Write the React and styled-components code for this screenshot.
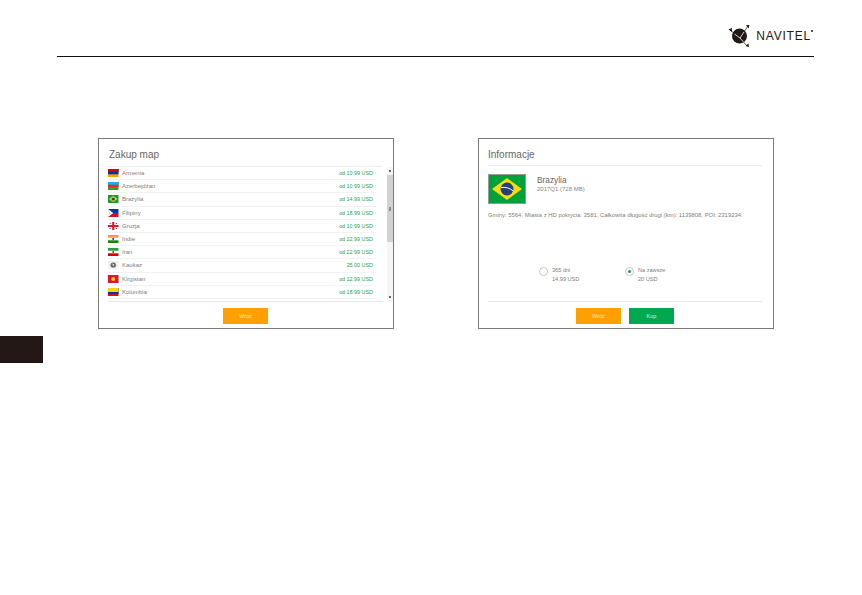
import React from 'react';
import styled, { createGlobalStyle } from 'styled-components';

const GlobalStyle = createGlobalStyle`
  html, body {
    margin: 0;
    padding: 0;
    background: #fff;
    font-family: 'Liberation Sans', Arial, sans-serif;
  }
`;

const Page = styled.div`
  width: 862px;
  height: 595px;
  overflow: hidden;
`;

const Header = styled.header`
  margin: 0 48px 0 57px;
  height: 56px;
  border-bottom: 1px solid #111;
  display: flex;
  justify-content: flex-end;
  align-items: flex-start;
`;

const Logo = styled.div`
  display: flex;
  align-items: center;
  margin-top: 24px;
  margin-right: 1px;
  color: #231815;
`;

const LogoText = styled.span`
  font-size: 12px;
  line-height: 24px;
  letter-spacing: 0.8px;
  margin-left: 2px;
`;

const LogoMark = styled.i`
  width: 2px;
  height: 2px;
  border-radius: 50%;
  background: #231815;
  align-self: flex-start;
  margin: 6px 0 0 0;
`;

const Panels = styled.main`
  display: flex;
  gap: 84px;
  margin: 81px 0 0 98px;
`;

const Panel = styled.section`
  width: 296px;
  height: 191px;
  box-sizing: border-box;
  border: 1px solid #7a7a7a;
  padding: 0 10px 0 9px;
  display: flex;
  flex-direction: column;
  color: #6b6b6b;
`;

const Title = styled.h2`
  margin: 0 1px 0 0;
  height: ${p => p.$height}px;
  padding-left: ${p => p.$indent || 0}px;
  line-height: 31px;
  font-size: 10px;
  font-weight: 400;
  color: #666;
  border-bottom: 1px solid #eee;
`;

const ListArea = styled.div`
  display: flex;
  height: 134px;
  margin-right: -10px;
`;

const List = styled.ul`
  list-style: none;
  margin: 0 11px 0 0;
  padding: 0;
  width: 268px;
  flex: none;
`;

const Row = styled.li`
  height: 13.2px;
  box-sizing: border-box;
  border-bottom: 1px solid #f2f2f2;
  display: flex;
  align-items: center;
  font-size: 6px;
  color: #808080;
`;

const RowFlag = styled.svg`
  width: 10.5px;
  height: 8px;
  margin-right: 3.5px;
  flex: none;
`;

const RowName = styled.span`
  flex: 1;
`;

const RowPrice = styled.span`
  color: #2ea04a;
  font-size: 5.4px;
  margin-right: 3px;
`;

const Scrollbar = styled.div`
  width: 6px;
  height: 134px;
  background: #f5f5f5;
  position: relative;
  flex: none;
`;

const Thumb = styled.div`
  position: absolute;
  top: 8px;
  left: 0;
  width: 6px;
  height: 67px;
  background: #d2d2d2;
  display: flex;
  align-items: center;
  justify-content: center;
  &::after {
    content: '';
    width: 2px;
    height: 4px;
    background: #8c8c8c;
  }
`;

const Arrow = styled.i`
  position: absolute;
  left: 2px;
  width: 2px;
  height: 2px;
  background: #666;
  ${p => (p.$bottom ? 'bottom: 3px;' : 'top: 3px;')}
`;

const Footer = styled.footer`
  margin-right: ${p => p.$inset || 0}px;
  border-top: 1px solid #e6e6e6;
  flex: 1;
  display: flex;
  justify-content: center;
  align-items: flex-start;
  gap: 8px;
  padding-top: 6px;
`;

const ActionButton = styled.button`
  width: 45px;
  height: 16px;
  padding: 0;
  border: 0;
  background: ${p => (p.$primary ? '#00a94f' : '#ff9f00')};
  color: ${p => (p.$primary ? '#d8f2e2' : '#ffe3b0')};
  font-family: inherit;
  font-size: 5.5px;
`;

const Info = styled.div`
  height: 135px;
  display: flex;
  flex-direction: column;
  margin-right: 1px;
`;

const MapHead = styled.div`
  display: flex;
  gap: 11px;
  padding-top: 8px;
`;

const BigFlag = styled.svg`
  width: 38px;
  height: 30px;
  flex: none;
`;

const MapName = styled.div`
  font-size: 8.3px;
  line-height: 10px;
  margin-top: 1px;
  color: #666;
`;

const MapMeta = styled.div`
  font-size: 6px;
  line-height: 9px;
  color: #888;
`;

const Stats = styled.p`
  margin: 7px 0 0;
  font-size: 5.9px;
  line-height: 9px;
  color: #808080;
  white-space: nowrap;
`;

const Options = styled.div`
  display: flex;
  gap: 40px;
  margin: 46px 0 0 51px;
`;

const Option = styled.div`
  display: flex;
  gap: 4px;
  width: 46px;
  font-size: 5.6px;
  line-height: 8.5px;
  color: #808080;
  white-space: nowrap;
`;

const Radio = styled.span`
  width: 9px;
  height: 9px;
  box-sizing: border-box;
  border: 1px solid #c6c6c6;
  border-radius: 50%;
  display: flex;
  align-items: center;
  justify-content: center;
  flex: none;
  margin-top: 0.5px;
  &::after {
    content: '';
    width: 3px;
    height: 3px;
    border-radius: 50%;
    background: ${p => (p.$checked ? '#00a94f' : 'transparent')};
  }
`;

const SideTab = styled.div`
  width: 43px;
  height: 27px;
  margin-top: 7px;
  background: #231815;
`;

const flags = {
  armenia: <><rect width="10" height="8" fill="#f2a800" /><rect width="10" height="5.3" fill="#0033a0" /><rect width="10" height="2.7" fill="#d90012" /></>,
  azerbaijan: <><rect width="10" height="8" fill="#3f9c35" /><rect width="10" height="5.3" fill="#ed2939" /><rect width="10" height="2.7" fill="#00b9e4" /></>,
  brazil: <><rect width="10" height="8" fill="#1a9b3e" /><path d="M5 1 L9 4 L5 7 L1 4 Z" fill="#f5d90a" /><circle cx="5" cy="4" r="1.6" fill="#23407f" /></>,
  philippines: <><rect width="10" height="4" fill="#0038a8" /><rect y="4" width="10" height="4" fill="#ce1126" /><path d="M0 0 L5 4 L0 8 Z" fill="#fff" /><circle cx="1.5" cy="4" r="0.8" fill="#fcd116" /></>,
  georgia: <><rect width="10" height="8" fill="#fff" /><rect x="4" width="2" height="8" fill="#e8112d" /><rect y="3" width="10" height="2" fill="#e8112d" /><rect x="1.5" y="1" width="1" height="1" fill="#e8112d" /><rect x="7.5" y="1" width="1" height="1" fill="#e8112d" /><rect x="1.5" y="6" width="1" height="1" fill="#e8112d" /><rect x="7.5" y="6" width="1" height="1" fill="#e8112d" /></>,
  india: <><rect width="10" height="8" fill="#fff" /><rect width="10" height="2.7" fill="#f79a3b" /><rect y="5.3" width="10" height="2.7" fill="#138808" /><circle cx="5" cy="4" r="1" fill="#26358c" /></>,
  iran: <><rect width="10" height="8" fill="#fff" /><rect width="10" height="2.7" fill="#239f40" /><rect y="5.3" width="10" height="2.7" fill="#da0000" /><circle cx="5" cy="4" r="0.9" fill="#da0000" /></>,
  caucasus: <><rect width="10" height="8" fill="#f1f1f1" /><circle cx="5" cy="4" r="2.6" fill="#666" /><path d="M4 2.5 L6 3.5 L5 5.5 Z" fill="#eee" /></>,
  kyrgyzstan: <><rect width="10" height="8" fill="#e8112d" /><circle cx="5" cy="4" r="1.9" fill="#ffd700" /></>,
  colombia: <><rect width="10" height="8" fill="#ce1126" /><rect width="10" height="6" fill="#003893" /><rect width="10" height="4" fill="#fcd116" /></>
};

const maps = [
  { name: 'Armenia', price: 'od 10.99 USD', flag: 'armenia' },
  { name: 'Azerbejdżan', price: 'od 10.99 USD', flag: 'azerbaijan' },
  { name: 'Brazylia', price: 'od 14.99 USD', flag: 'brazil' },
  { name: 'Filipiny', price: 'od 18.99 USD', flag: 'philippines' },
  { name: 'Gruzja', price: 'od 10.99 USD', flag: 'georgia' },
  { name: 'Indie', price: 'od 22.99 USD', flag: 'india' },
  { name: 'Iran', price: 'od 22.99 USD', flag: 'iran' },
  { name: 'Kaukaz', price: '25.00 USD', flag: 'caucasus' },
  { name: 'Kirgistan', price: 'od 12.99 USD', flag: 'kyrgyzstan' },
  { name: 'Kolumbia', price: 'od 18.99 USD', flag: 'colombia' }
];

const NavitelLogo = () => (
  <svg width="26" height="24" viewBox="0 0 26 24">
    <circle cx="11.5" cy="12" r="7.5" fill="#231815" />
    <path d="M2 6 L12 14 L20 2 M12 14 L19 22" stroke="#231815" strokeWidth="0.7" fill="none" />
    <path d="M6.5 10 L12 14 L16 8 M12 14 L15.5 18" stroke="#fff" strokeWidth="0.8" fill="none" />
    <path d="M0.5 5.5 L4 4 L4 8 Z M18 1 L21.5 1 L20.5 4.5 Z M17.5 22 L20.5 19.5 L21 23 Z" fill="#231815" />
  </svg>
);

const App = () => (
  <Page>
    <GlobalStyle />
    <Header>
      <Logo>
        <NavitelLogo />
        <LogoText>NAVITEL</LogoText>
        <LogoMark />
      </Logo>
    </Header>
    <Panels>
      <Panel>
        <Title $height={27} $indent={1}>Zakup map</Title>
        <ListArea>
          <List>
            {maps.map(item => (
              <Row key={item.name}>
                <RowFlag viewBox="0 0 10 8" preserveAspectRatio="none">{flags[item.flag]}</RowFlag>
                <RowName>{item.name}</RowName>
                <RowPrice>{item.price}</RowPrice>
              </Row>
            ))}
          </List>
          <Scrollbar>
            <Arrow />
            <Thumb />
            <Arrow $bottom />
          </Scrollbar>
        </ListArea>
        <Footer>
          <ActionButton>Wróć</ActionButton>
        </Footer>
      </Panel>
      <Panel>
        <Title $height={26}>Informacje</Title>
        <Info>
          <MapHead>
            <BigFlag viewBox="0 0 38 30">
              <rect x="0.5" y="0.5" width="37" height="29" fill="#00a13a" stroke="#999" />
              <path d="M19 4 L34 15 L19 26 L4 15 Z" fill="#f7dd0a" />
              <circle cx="19" cy="15" r="6.5" fill="#23407f" />
              <path d="M12.8 13.5 C17 12.8 22 14 25.2 17" stroke="#fff" strokeWidth="1" fill="none" />
            </BigFlag>
            <div>
              <MapName>Brazylia</MapName>
              <MapMeta>2017Q1 (728 MB)</MapMeta>
            </div>
          </MapHead>
          <Stats>Gminy: 5564, Miasta z HD pokrycia: 3581, Całkowita długość drogi (km): 1139808, POI: 2319234.</Stats>
          <Options>
            <Option>
              <Radio />
              <div>365 dni<br />14.99 USD</div>
            </Option>
            <Option>
              <Radio $checked />
              <div>Na zawsze<br />20 USD</div>
            </Option>
          </Options>
        </Info>
        <Footer $inset={1}>
          <ActionButton>Wróć</ActionButton>
          <ActionButton $primary>Kup</ActionButton>
        </Footer>
      </Panel>
    </Panels>
    <SideTab />
  </Page>
);

export default App;
